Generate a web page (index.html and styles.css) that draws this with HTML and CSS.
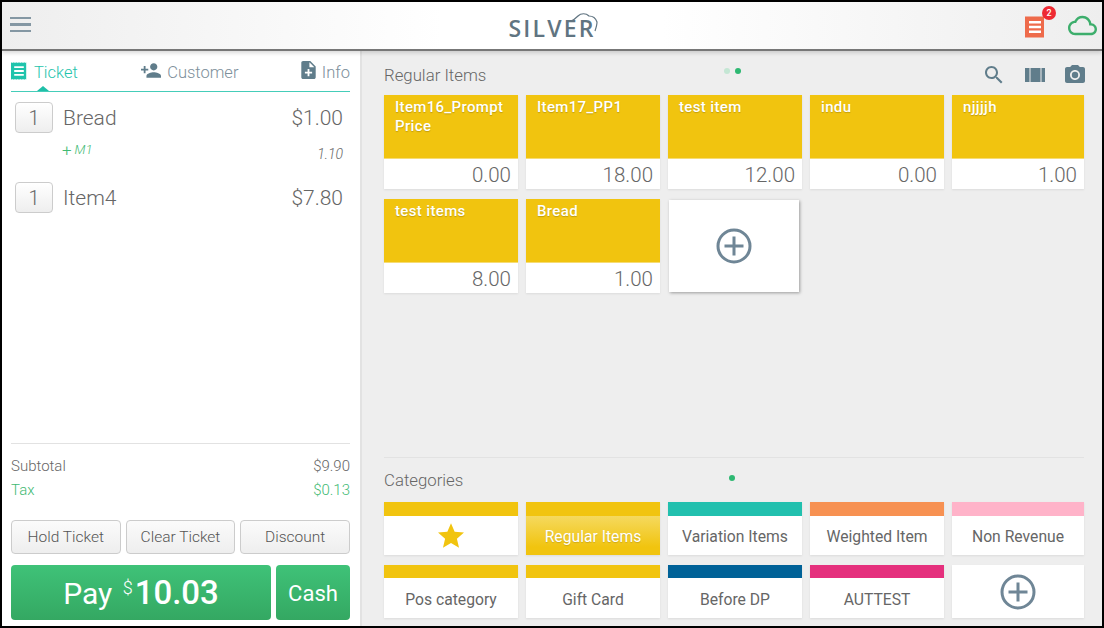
FILE: index.html
```html
<!DOCTYPE html>
<html lang="en">
<head>
    <meta charset="UTF-8">
    <title>Silver POS</title>
    <link rel="stylesheet" href="styles.css">
</head>
<body>
    <svg class="defs" width="0" height="0">
        <symbol id="receipt" viewBox="0 0 20 22">
            <path fill="currentColor" d="M0 1l1-1 1 1 1-1 1 1 1-1 1 1 1-1 1 1 1-1 1 1 1-1 1 1 1-1 1 1 1-1 1 1 1-1 1 1 1-1v22l-1-1-1 1-1-1-1 1-1-1-1 1-1-1-1 1-1-1-1 1-1-1-1 1-1-1-1 1-1-1-1 1-1-1-1 1-1-1-1 1z"/>
            <path fill="#fff" d="M4 5h12v2.400H4zM4 9.800h12v2.400H4zM4 14.600h12V17H4z"/>
        </symbol>
        <symbol id="plus-circle" viewBox="0 0 36 36">
            <circle cx="18" cy="18" r="16" fill="none" stroke="currentColor" stroke-width="3"/>
            <path fill="currentColor" d="M16.500 8.500h3v8h8v3h-8v8h-3v-8h-8v-3h8z"/>
        </symbol>
    </svg>

    <div class="frame">
        <!-- Top bar -->
        <header class="topbar">
            <div class="topbar-left">
                <div class="burger"><span></span><span></span><span></span></div>
            </div>
            <div class="logo">
                <span class="logo-text">SILVER</span>
                <svg class="logo-cloud" viewBox="0 0 28 20"><path fill="none" stroke="currentColor" stroke-width="1.200" d="M1 9C4 8 6 6 8 4c3-3 8-3 11 0 4 0 7 3 8 6 0 3-1 6-2 9"/></svg>
            </div>
            <div class="topbar-right">
                <div class="ticket-alert">
                    <svg class="alert-icon"><use href="#receipt"/></svg>
                    <span class="badge">2</span>
                </div>
                <svg class="cloud-icon" viewBox="0 0 24 24"><path fill="currentColor" d="M19.350 10.040C18.670 6.590 15.640 4 12 4 9.110 4 6.600 5.640 5.350 8.040 2.340 8.360 0 10.910 0 14c0 3.310 2.690 6 6 6h13c2.760 0 5-2.240 5-5 0-2.640-2.050-4.780-4.650-4.960zM19 18H6c-2.210 0-4-1.790-4-4s1.790-4 4-4h.71C7.370 7.690 9.480 6 12 6c3.040 0 5.500 2.460 5.500 5.500v.5H19c1.660 0 3 1.340 3 3s-1.340 3-3 3z"/></svg>
            </div>
        </header>

        <div class="content">
            <!-- Ticket panel -->
            <aside class="ticket">
                <nav class="tabs">
                    <div class="tab tab-active">
                        <svg class="tab-icon-receipt"><use href="#receipt"/></svg>
                        <span>Ticket</span>
                    </div>
                    <div class="tab">
                        <svg class="tab-icon-person" viewBox="1 4 22 16"><path fill="currentColor" d="M15 12c2.210 0 4-1.790 4-4s-1.790-4-4-4-4 1.790-4 4 1.790 4 4 4zm-9-2V7H4v3H1v2h3v3h2v-3h3v-2H6zm9 4c-2.670 0-8 1.340-8 4v2h16v-2c0-2.660-5.330-4-8-4z"/></svg>
                        <span>Customer</span>
                    </div>
                    <div class="tab">
                        <svg class="tab-icon-note" viewBox="4 2 16 20"><path fill="currentColor" d="M14 2H6c-1.100 0-1.990.9-1.990 2L4 20c0 1.100.89 2 1.990 2H18c1.100 0 2-.9 2-2V8l-6-6zm2 14h-3v3h-2v-3H8v-2h3v-3h2v3h3v2zm-3-7V3.500L18.500 9H13z"/></svg>
                        <span>Info</span>
                    </div>
                </nav>

                <div class="lines">
                    <div class="line">
                        <div class="qty">1</div>
                        <div class="line-name">Bread</div>
                        <div class="line-price">$1.00</div>
                    </div>
                    <div class="modifier">
                        <span class="mod-name"><span class="mod-plus">+</span><em>M1</em></span>
                        <em class="mod-price">1.10</em>
                    </div>
                    <div class="line">
                        <div class="qty">1</div>
                        <div class="line-name">Item4</div>
                        <div class="line-price">$7.80</div>
                    </div>
                </div>

                <div class="totals">
                    <div class="total-row"><span>Subtotal</span><span>$9.90</span></div>
                    <div class="total-row total-tax"><span>Tax</span><span>$0.13</span></div>
                </div>

                <div class="actions">
                    <button class="action-btn">Hold Ticket</button>
                    <button class="action-btn">Clear Ticket</button>
                    <button class="action-btn">Discount</button>
                </div>

                <div class="pay-row">
                    <button class="pay-btn">Pay <sup>$</sup><b>10.03</b></button>
                    <button class="cash-btn">Cash</button>
                </div>
            </aside>

            <!-- Items and categories -->
            <main class="catalog">
                <div class="section-head">
                    <span class="section-title">Regular Items</span>
                    <div class="dots"><i class="dot dot-dim"></i><i class="dot"></i></div>
                    <div class="tools">
                        <svg class="tool-search" viewBox="3 3 18 18"><path fill="currentColor" d="M15.500 14h-.79l-.28-.27C15.410 12.590 16 11.110 16 9.500 16 5.910 13.090 3 9.500 3S3 5.910 3 9.500 5.910 16 9.500 16c1.610 0 3.090-.59 4.230-1.570l.27.28v.79l5 4.990L20.490 19l-4.990-5zm-6 0C7.010 14 5 11.990 5 9.500S7.010 5 9.500 5 14 7.010 14 9.500 11.990 14 9.500 14z"/></svg>
                        <svg class="tool-barcode" viewBox="0 0 20 14"><path fill="currentColor" d="M0 0h4.500v14H0zM5.500 0h10v14h-10zM16.500 0H20v14h-3.500z"/></svg>
                        <svg class="tool-camera" viewBox="2 2 20 18"><path fill="currentColor" fill-rule="evenodd" d="M9 2L7.170 4H4c-1.100 0-2 .9-2 2v12c0 1.100.9 2 2 2h16c1.100 0 2-.9 2-2V6c0-1.100-.9-2-2-2h-3.170L15 2H9zm3 15c-2.760 0-5-2.240-5-5s2.240-5 5-5 5 2.240 5 5-2.240 5-5 5z"/><circle fill="currentColor" cx="12" cy="12" r="3.200"/></svg>
                    </div>
                </div>

                <div class="items">
                    <div class="item"><div class="item-name">Item16_Prompt Price</div><div class="item-price">0.00</div></div>
                    <div class="item"><div class="item-name">Item17_PP1</div><div class="item-price">18.00</div></div>
                    <div class="item"><div class="item-name">test item</div><div class="item-price">12.00</div></div>
                    <div class="item"><div class="item-name">indu</div><div class="item-price">0.00</div></div>
                    <div class="item"><div class="item-name">njjjjh</div><div class="item-price">1.00</div></div>
                    <div class="item"><div class="item-name">test items</div><div class="item-price">8.00</div></div>
                    <div class="item"><div class="item-name">Bread</div><div class="item-price">1.00</div></div>
                    <div class="item-add"><svg class="plus-icon"><use href="#plus-circle"/></svg></div>
                </div>

                <div class="section-head section-head-cat">
                    <span class="section-title">Categories</span>
                    <div class="dots"><i class="dot"></i></div>
                    <div></div>
                </div>

                <div class="cats">
                    <div class="cat cat-yellow"><div class="cat-label"><svg class="star" viewBox="2 2 20 19"><path fill="currentColor" d="M12 17.270L18.180 21l-1.640-7.030L22 9.240l-7.190-.61L12 2 9.190 8.630 2 9.240l5.460 4.730L5.820 21z"/></svg></div></div>
                    <div class="cat cat-yellow cat-selected"><div class="cat-label">Regular Items</div></div>
                    <div class="cat cat-teal"><div class="cat-label">Variation Items</div></div>
                    <div class="cat cat-orange"><div class="cat-label">Weighted Item</div></div>
                    <div class="cat cat-pink"><div class="cat-label">Non Revenue</div></div>
                    <div class="cat cat-yellow cat-low"><div class="cat-label">Pos category</div></div>
                    <div class="cat cat-yellow cat-low"><div class="cat-label">Gift Card</div></div>
                    <div class="cat cat-blue cat-low"><div class="cat-label">Before DP</div></div>
                    <div class="cat cat-magenta cat-low"><div class="cat-label">AUTTEST</div></div>
                    <div class="cat cat-add"><svg class="plus-icon"><use href="#plus-circle"/></svg></div>
                </div>
            </main>
        </div>
    </div>
</body>
</html>
```

FILE: styles.css
```css
/* Base */
* {
    box-sizing: border-box;
}

body {
    margin: 0;
    font-family: 'Roboto', sans-serif;
    color: #666;
    background-color: #000;
}

.defs {
    position: absolute;
}

.frame {
    width: 1104px;
    height: 628px;
    border: 2px solid #000;
    display: flex;
    flex-direction: column;
    overflow: hidden;
    background-color: #eee;
}

/* Top bar */
.topbar {
    height: 49px;
    flex-shrink: 0;
    display: grid;
    grid-template-columns: 1fr auto 1fr;
    align-items: center;
    padding: 0 5px 2px 8px;
    background: linear-gradient(to right, #eee, #fff 40%, #fff 60%, #eee);
    border-bottom: 2px solid #777;
    box-shadow: 0 2px 4px rgba(0, 0, 0, 0.15);
    position: relative;
}

.burger {
    width: 21px;
    display: flex;
    flex-direction: column;
    gap: 4px;
}

.burger span {
    height: 2.500px;
    background-color: #8497a3;
}

.logo {
    position: relative;
    margin: 10px 3px 0 0;
    line-height: 31px;
    color: #607481;
}

.logo-text {
    font-family: 'Open Sans', sans-serif;
    font-size: 23px;
    font-weight: 600;
    letter-spacing: 2.200px;
}

.logo-cloud {
    position: absolute;
    top: -1px;
    right: -2px;
    width: 28px;
    height: 20px;
}

.topbar-right {
    display: flex;
    justify-content: flex-end;
    align-items: center;
    gap: 23px;
}

.ticket-alert {
    position: relative;
    height: 22px;
    margin-top: 4px;
}

.alert-icon {
    display: block;
    width: 20px;
    height: 22px;
    color: #ee6b4b;
}

.badge {
    position: absolute;
    top: -10px;
    right: -11px;
    width: 14px;
    height: 14px;
    border-radius: 50%;
    background-color: #ee2a33;
    color: #fff;
    font-size: 9px;
    font-weight: 500;
    line-height: 14px;
    text-align: center;
}

.cloud-icon {
    width: 29px;
    height: 29px;
    color: #3dae6c;
    margin-top: 2px;
}

/* Layout under the top bar */
.content {
    flex: 1;
    min-height: 0;
    display: flex;
}

/* Ticket panel */
.ticket {
    width: 360px;
    flex-shrink: 0;
    display: flex;
    flex-direction: column;
    padding: 0 10px 6px 9px;
    background-color: #fff;
    border-right: 2px solid #e2e2e2;
}

.tabs {
    height: 41px;
    flex-shrink: 0;
    display: flex;
    justify-content: space-between;
    align-items: flex-start;
    padding-top: 12px;
    border-bottom: 1px solid #45cdb9;
    position: relative;
}

.tabs::after {
    content: '';
    position: absolute;
    left: 26px;
    bottom: 0;
    border-left: 6px solid transparent;
    border-right: 6px solid transparent;
    border-bottom: 5px solid #1fbfa8;
}

.tab {
    display: flex;
    align-items: center;
    font-size: 16.500px;
    font-weight: 300;
    line-height: 20px;
    color: #7d8f9b;
}

.tab-active {
    color: #1fc4ac;
}

.tab-icon-receipt {
    width: 16px;
    height: 18px;
    margin: -4px 7px 0 0;
}

.tab-icon-person {
    width: 20px;
    height: 15px;
    margin: -6px 6px 0 1px;
    color: #607d8b;
}

.tab-icon-note {
    width: 15px;
    height: 18px;
    margin: -6px 6px 0 0;
    color: #607d8b;
}

.lines {
    flex: 1;
    padding: 10px 7px 0 4px;
}

.line {
    display: flex;
    align-items: center;
    height: 31px;
}

.qty {
    width: 38px;
    height: 31px;
    margin-right: 10px;
    border: 1px solid #ccc;
    border-radius: 4px;
    background: linear-gradient(to bottom, #fff, #eee);
    font-size: 20px;
    font-weight: 300;
    line-height: 30px;
    text-align: center;
}

.line-name {
    flex: 1;
    font-size: 21px;
    font-weight: 300;
}

.line-price {
    font-size: 21px;
    font-weight: 300;
}

.modifier {
    height: 49px;
    display: flex;
    justify-content: space-between;
    padding: 9px 0 0 47px;
    font-size: 13px;
    font-weight: 300;
    line-height: 16px;
}

.mod-name {
    color: #3fba74;
}

.mod-plus {
    font-size: 17px;
    margin-right: 3px;
}

.mod-name em {
    position: relative;
    top: -2px;
}

.mod-price {
    margin-top: 4px;
    font-size: 14px;
}

.totals {
    border-top: 1px solid #e2e2e2;
    padding-top: 10px;
    margin-bottom: 18px;
}

.total-row {
    display: flex;
    justify-content: space-between;
    height: 24px;
    font-size: 15px;
    font-weight: 300;
    line-height: 24px;
}

.total-tax {
    color: #3fba74;
}

.actions {
    display: grid;
    grid-template-columns: repeat(3, 1fr);
    gap: 5px;
    margin-bottom: 11px;
}

.action-btn {
    height: 34px;
    padding: 0;
    border: 1px solid #ccc;
    border-radius: 4px;
    background: linear-gradient(to bottom, #fbfbfb, #eee);
    font-family: inherit;
    font-size: 15.500px;
    font-weight: 300;
    color: #555;
}

.pay-row {
    display: flex;
    gap: 5px;
}

.pay-btn, .cash-btn {
    height: 55px;
    padding: 0;
    border: none;
    border-radius: 4px;
    background: linear-gradient(to bottom, #3fc278, #34a862);
    font-family: inherit;
    color: #fff;
}

.pay-btn {
    width: 260px;
    font-size: 30px;
}

.pay-btn sup {
    font-size: 18px;
    font-weight: 300;
    line-height: 0;
    vertical-align: 10px;
    margin-left: 3px;
}

.pay-btn b {
    font-size: 33px;
    font-weight: 500;
    margin-left: 2px;
}

.cash-btn {
    flex: 1;
    font-size: 22px;
    padding-top: 1px;
}

/* Catalog */
.catalog {
    flex: 1;
    min-width: 0;
    padding: 0 18px 0 22px;
    display: flex;
    flex-direction: column;
}

.section-head {
    display: grid;
    grid-template-columns: 1fr auto 1fr;
    align-items: center;
    height: 44px;
    padding-top: 4px;
}

.section-head-cat {
    height: 45px;
    border-top: 1px solid #e2e2e2;
    padding-top: 0;
}

.section-title {
    font-size: 16.800px;
    font-weight: 300;
}

.dots {
    display: flex;
    gap: 5px;
    margin: -8px 4px 0 0;
}

.section-head-cat .dots {
    margin-top: -4px;
}

.dot {
    width: 6px;
    height: 6px;
    border-radius: 50%;
    background-color: #2eb872;
}

.dot-dim {
    background-color: #c4e6d4;
}

.tools {
    display: flex;
    justify-content: flex-end;
    align-items: center;
    gap: 20px;
    margin: -1px -1px 0 0;
    color: #607d8b;
}

.tool-search {
    width: 18px;
    height: 18px;
    margin-right: 2px;
}

.tool-barcode {
    width: 20px;
    height: 14px;
}

.tool-camera {
    width: 20px;
    height: 18px;
    margin-bottom: 2px;
}

.items {
    flex: 1;
    display: grid;
    grid-template-columns: repeat(4, 134px) 132px;
    grid-auto-rows: 94px;
    gap: 10px 8px;
    align-content: start;
}

.item {
    display: flex;
    flex-direction: column;
    background-color: #fff;
    box-shadow: 0 1px 2px rgba(0, 0, 0, 0.08);
}

.item-name {
    height: 64px;
    flex-shrink: 0;
    padding: 3px 10px 0 11px;
    background-color: #f1c40f;
    color: #fff;
    font-size: 15px;
    font-weight: 500;
    letter-spacing: 0.350px;
    line-height: 19px;
    text-shadow: 0 1px 1px rgba(0, 0, 0, 0.2);
    border-bottom: 1px solid #f6dc74;
}

.item-price {
    flex: 1;
    padding-right: 7px;
    font-size: 20.500px;
    font-weight: 300;
    line-height: 32px;
    text-align: right;
}

.item-add {
    display: flex;
    align-items: center;
    justify-content: center;
    margin: 1px 3px 1px 1px;
    background-color: #fff;
    box-shadow: 1px 1px 3px rgba(0, 0, 0, 0.35);
}

.plus-icon {
    width: 36px;
    height: 36px;
    color: #6f8696;
}

.cats {
    display: grid;
    grid-template-columns: repeat(4, 134px) 132px;
    grid-auto-rows: 53px;
    gap: 10px 8px;
    margin-bottom: 8px;
}

.cat {
    display: flex;
    flex-direction: column;
    border-top: 14px solid #f1c40f;
    background-color: #fff;
    box-shadow: 0 1px 2px rgba(0, 0, 0, 0.08);
}

.cat-low {
    border-top-width: 13px;
}

.cat-label {
    flex: 1;
    display: flex;
    align-items: center;
    justify-content: center;
    padding-top: 2px;
    font-size: 15.700px;
    font-weight: 400;
}

.cat-selected .cat-label {
    background: linear-gradient(to bottom, #f5d95e, #f1c40f 80%);
    color: #fff;
    text-shadow: 0 1px 1px rgba(0, 0, 0, 0.15);
}

.cat-teal {
    border-top-color: #22c0ae;
}

.cat-orange {
    border-top-color: #f79152;
}

.cat-pink {
    border-top-color: #ffb3c9;
}

.cat-blue {
    border-top-color: #006298;
}

.cat-magenta {
    border-top-color: #e5307d;
}

.cat-add {
    border-top: none;
    align-items: center;
    justify-content: center;
}

.star {
    width: 26px;
    height: 25px;
    margin-top: -2px;
    color: #f1c40f;
}
```
